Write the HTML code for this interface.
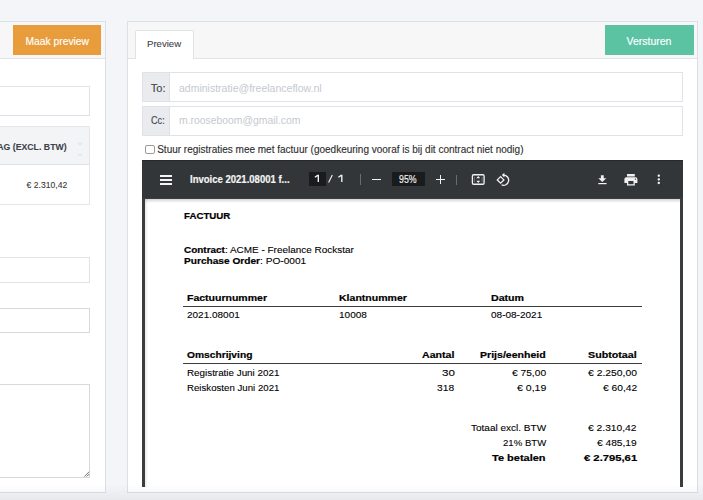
<!DOCTYPE html>
<html><head><meta charset="utf-8">
<style>
*{box-sizing:border-box;margin:0;padding:0}
html,body{width:703px;height:500px;overflow:hidden}
body{background:#f4f5f9;position:relative;font-family:"Liberation Sans",sans-serif;color:#333}
.a{position:absolute}
.t{position:absolute;white-space:nowrap;line-height:1}
.pd{-webkit-text-stroke:0.1px #000}
.pd b,.pdb{-webkit-text-stroke:0.2px #000}
.panel{position:absolute;background:#fff;border:1px solid #dcdfe5}
.hdr{position:absolute;left:0;right:0;top:0;height:37px;background:#f7f7f7;border-bottom:1px solid #e0e3e8}
.btn{position:absolute;color:#fff;font-size:10.3px}
.inp{position:absolute;background:#fff;border:1px solid #dfe2e7}
.pdf{font-family:"Liberation Sans",sans-serif;color:#111}
.b{font-weight:bold}
</style></head><body>

<!-- LEFT PANEL -->
<div class="panel" style="left:-20px;top:21px;width:126px;height:472px">
  <div class="hdr"></div>
</div>
<div class="a" style="left:13px;top:25.3px;width:88px;height:29.6px;background:#e89c3c"></div>
<div class="t" style="left:25.5px;top:36.9px;font-size:10.3px;color:#fff;-webkit-text-stroke:0.15px #fff">Maak preview</div>

<div class="inp" style="left:-10px;top:86px;width:100px;height:29.5px"></div>
<!-- table -->
<div class="a" style="left:-10px;top:126px;width:99.5px;height:78.5px;border:1px solid #e3e6ea;background:#fff"></div>
<div class="a" style="left:-9px;top:127px;width:97.5px;height:37.8px;background:#f3f4f6;border-bottom:1px solid #dfe2e6"></div>
<div class="t b" style="left:-2.8px;top:142.9px;font-size:8.7px;color:#3d4148;letter-spacing:0.03px;-webkit-text-stroke:0.1px #3d4148">AG (EXCL. BTW)</div>
<div class="t" style="left:26.6px;top:180.5px;font-size:8.6px;color:#3a3a3a;-webkit-text-stroke:0.1px #3a3a3a">€ 2.310,42</div>

<div class="inp" style="left:-10px;top:257px;width:100px;height:25.5px"></div>
<div class="inp" style="left:-10px;top:307.5px;width:99.5px;height:25.5px;border-color:#d9d9d9"></div>
<div class="inp" style="left:-10px;top:384px;width:100px;height:93.5px;border-color:#d6d9de"></div>

<!-- RIGHT PANEL -->
<div class="panel" style="left:127px;top:21px;width:571px;height:472px">
  <div class="hdr"></div>
</div>
<div class="a" style="left:134.8px;top:30px;width:58.8px;height:29px;background:#fff;border:1px solid #dfe2e6;border-bottom:none;border-radius:2px 2px 0 0"></div>
<div class="t" style="left:147px;top:38.6px;font-size:9.6px;color:#3f4349;-webkit-text-stroke:0.1px #3f4349">Preview</div>
<div class="a" style="left:605px;top:25.3px;width:89px;height:29.6px;background:#5bc3a1"></div>
<div class="t" style="left:626.5px;top:36px;font-size:10.5px;color:#fff;-webkit-text-stroke:0.15px #fff">Versturen</div>

<div class="inp" style="left:142px;top:72px;width:541px;height:30px"></div>
<div class="a" style="left:142px;top:72px;width:28px;height:30px;background:#e9ebef;border:1px solid #dfe2e7"></div>
<div class="t" style="left:150.8px;top:83px;font-size:11px;color:#40444a;-webkit-text-stroke:0.12px #40444a">To:</div>
<div class="t" style="left:179px;top:82.5px;font-size:10.5px;color:#c5c9cf">administratie@freelanceflow.nl</div>

<div class="inp" style="left:142px;top:106px;width:541px;height:29.5px"></div>
<div class="a" style="left:142px;top:106px;width:28px;height:29.5px;background:#e9ebef;border:1px solid #dfe2e7"></div>
<div class="t" style="left:150.8px;top:116.2px;font-size:10.4px;color:#40444a;-webkit-text-stroke:0.12px #40444a;transform:scaleX(0.88);transform-origin:0 0">Cc:</div>
<div class="t" style="left:179px;top:116px;font-size:10.4px;color:#c5c9cf">m.rooseboom@gmail.com</div>

<div class="a" style="left:145px;top:144.5px;width:9.5px;height:9.5px;border:1px solid #9a9a9a;border-radius:2px;background:#fff"></div>
<div class="t" style="left:157.2px;top:145px;font-size:10px;color:#2e2e2e;-webkit-text-stroke:0.12px #2e2e2e">Stuur registraties mee met factuur (goedkeuring vooraf is bij dit contract niet nodig)</div>

<!-- PDF VIEWER -->
<div class="a" style="left:142px;top:159.6px;width:541px;height:327.4px;background:#3a3d40"></div>
<div class="a" style="left:142px;top:159.6px;width:541px;height:38.9px;background:#323639;border-top:1px solid #26292b"></div>
<div class="a" style="left:145px;top:198.5px;width:535px;height:288.5px;background:#fff"></div>

<!-- TOOLBAR -->
<div class="a" style="left:160px;top:174.5px;width:12px;height:2px;background:#f4f4f4"></div>
<div class="a" style="left:160px;top:178.5px;width:12px;height:2px;background:#f4f4f4"></div>
<div class="a" style="left:160px;top:182.5px;width:12px;height:2px;background:#f4f4f4"></div>
<div class="t" style="left:190.3px;top:174.98px;font-size:10.3px;font-weight:bold;color:#f4f4f4;transform:scaleX(0.925);transform-origin:0 0;-webkit-text-stroke:0.2px #f4f4f4">Invoice 2021.08001 f...</div>
<div class="a" style="left:308.8px;top:172.3px;width:17px;height:14px;background:#191b1c"></div>
<svg class="a" style="left:305px;top:170px" width="45" height="20" viewBox="305 170 45 20">
  <path d="M314.9 177.3 L317.6 175.4 H318.3 V182.1" fill="none" stroke="#f4f4f4" stroke-width="1.35" stroke-linejoin="miter"/>
  <path d="M328.6 182.6 L332.3 175.1" fill="none" stroke="#f4f4f4" stroke-width="1.1"/>
  <path d="M338.4 177.3 L341.1 175.4 H341.8 V182.1" fill="none" stroke="#f4f4f4" stroke-width="1.35"/>
</svg>
<div class="a" style="left:360.2px;top:174.2px;width:1px;height:10.7px;background:#6b6e71"></div>
<div class="a" style="left:372px;top:178.5px;width:9px;height:1.5px;background:#f1f1f1"></div>
<div class="a" style="left:392.2px;top:172.4px;width:32.8px;height:14px;background:#191b1c"></div>
<div class="t" style="left:399.2px;top:174.9px;font-size:10.1px;color:#f4f4f4;transform:scaleX(0.87);transform-origin:0 0;-webkit-text-stroke:0.15px #f4f4f4">95%</div>
<div class="a" style="left:436px;top:178.5px;width:9px;height:1.5px;background:#f1f1f1"></div>
<div class="a" style="left:439.75px;top:174.8px;width:1.5px;height:9px;background:#f1f1f1"></div>
<div class="a" style="left:456px;top:174.5px;width:1px;height:10.5px;background:#6b6e71"></div>
<!-- ICONS -->
<svg class="a" style="left:466px;top:168px" width="56" height="24" viewBox="466 168 56 24">
  <rect x="472.4" y="174.75" width="11.7" height="9.5" rx="1.2" fill="none" stroke="#f1f1f1" stroke-width="1.3"/>
  <path d="M478.25 176.1 L476.3 178.3 L480.2 178.3 Z M478.25 182.9 L476.3 180.7 L480.2 180.7 Z" fill="#f4f4f4"/>
  <path d="M474.4 176.8 V182.2 M482.1 176.8 V182.2" stroke="#77797b" stroke-width="0.8"/>
  <path d="M500.6 176.6 L503.9 179.9 L500.6 183.2 L497.3 179.9 Z" fill="none" stroke="#f4f4f4" stroke-width="1.3"/>
  <path d="M503.6 175.1 A5.1 5.1 0 1 1 501.6 184.9" fill="none" stroke="#f4f4f4" stroke-width="1.3"/>
  <path d="M501.9 175.1 L504.4 172.8 L504.4 177.4 Z" fill="#f4f4f4"/>
</svg>
<svg class="a" style="left:590px;top:168px" width="80" height="24" viewBox="590 168 80 24">
  <path d="M600.9 175.3 H603.7 V178.2 H606.3 L602.3 182.1 L598.3 178.2 H600.9 Z" fill="#f1f1f1"/>
  <rect x="598.3" y="183" width="8.3" height="1.2" fill="#f1f1f1"/>
  <g transform="translate(623.1,172.2) scale(0.65,0.63)">
    <path d="M19 8H5c-1.66 0-3 1.34-3 3v6h4v4h12v-4h4v-6c0-1.660-1.34-3-3-3zm-3 11H8v-5h8v5zm3-7c-.55 0-1-.45-1-1s.45-1 1-1 1 .45 1 1-.45 1-1 1zm-1-9H6v4h12V3z" fill="#f1f1f1"/>
  </g>
  <g transform="translate(651.6,172.2) scale(0.6)">
    <path d="M12 8c1.1 0 2-.9 2-2s-.9-2-2-2-2 .9-2 2 .9 2 2 2zm0 2c-1.1 0-2 .9-2 2s.9 2 2 2 2-.9 2-2-.9-2-2-2zm0 6c-1.1 0-2 .9-2 2s.9 2 2 2 2-.9 2-2-.9-2-2-2z" fill="#f1f1f1"/>
  </g>
</svg>
<!-- PDF CONTENT -->
<div class="t pdb" style="left:183.90px;top:211.10px;font-size:9.45px;font-weight:bold;transform:scaleX(1.0279);transform-origin:0 0;color:#000">FACTUUR</div>
<div class="t pd" style="left:183.60px;top:245.10px;font-size:9.45px;transform:scaleX(1.0545);transform-origin:0 0;color:#000"><b>Contract</b>: ACME - Freelance Rockstar</div>
<div class="t pd" style="left:183.60px;top:255.90px;font-size:9.45px;transform:scaleX(1.0739);transform-origin:0 0;color:#000"><b>Purchase Order</b>: PO-0001</div>
<div class="t pdb" style="left:186.70px;top:292.80px;font-size:9.45px;font-weight:bold;transform:scaleX(1.1135);transform-origin:0 0;color:#000">Factuurnummer</div>
<div class="t pdb" style="left:338.80px;top:292.80px;font-size:9.45px;font-weight:bold;transform:scaleX(1.1165);transform-origin:0 0;color:#000">Klantnummer</div>
<div class="t pdb" style="left:490.90px;top:292.80px;font-size:9.45px;font-weight:bold;transform:scaleX(1.1259);transform-origin:0 0;color:#000">Datum</div>
<div class="a" style="left:183px;top:306px;width:458.5px;height:1px;background:#3c3c3c"></div>
<div class="t pd" style="left:186.70px;top:310.20px;font-size:9.45px;transform:scaleX(1.0576);transform-origin:0 0;color:#000">2021.08001</div>
<div class="t pd" style="left:338.80px;top:310.20px;font-size:9.45px;transform:scaleX(1.0616);transform-origin:0 0;color:#000">10008</div>
<div class="t pd" style="left:490.90px;top:310.20px;font-size:9.45px;transform:scaleX(1.0613);transform-origin:0 0;color:#000">08-08-2021</div>
<div class="t pdb" style="left:186.50px;top:350.20px;font-size:9.45px;font-weight:bold;transform:scaleX(1.0845);transform-origin:0 0;color:#000">Omschrijving</div>
<div class="t pdb" style="left:422.00px;top:350.20px;font-size:9.45px;font-weight:bold;transform:scaleX(1.1219);transform-origin:0 0;color:#000">Aantal</div>
<div class="t pdb" style="left:480.00px;top:350.20px;font-size:9.45px;font-weight:bold;transform:scaleX(1.1185);transform-origin:0 0;color:#000">Prijs/eenheid</div>
<div class="t pdb" style="left:588.20px;top:350.20px;font-size:9.45px;font-weight:bold;transform:scaleX(1.1335);transform-origin:0 0;color:#000">Subtotaal</div>
<div class="a" style="left:183px;top:363px;width:458.5px;height:1px;background:#3c3c3c"></div>
<div class="t pd" style="left:186.50px;top:367.50px;font-size:9.45px;transform:scaleX(1.0419);transform-origin:0 0;color:#000">Registratie Juni 2021</div>
<div class="t pd" style="left:441.50px;top:367.50px;font-size:9.45px;transform:scaleX(1.2276);transform-origin:0 0;color:#000">30</div>
<div class="t pd" style="left:511.70px;top:367.50px;font-size:9.45px;transform:scaleX(1.0817);transform-origin:0 0;color:#000">€ 75,00</div>
<div class="t pd" style="left:588.00px;top:367.50px;font-size:9.45px;transform:scaleX(1.0969);transform-origin:0 0;color:#000">€ 2.250,00</div>
<div class="t pd" style="left:186.50px;top:383.00px;font-size:9.45px;transform:scaleX(1.0237);transform-origin:0 0;color:#000">Reiskosten Juni 2021</div>
<div class="t pd" style="left:437.30px;top:383.00px;font-size:9.45px;transform:scaleX(1.0848);transform-origin:0 0;color:#000">318</div>
<div class="t pd" style="left:516.50px;top:383.00px;font-size:9.45px;transform:scaleX(1.1153);transform-origin:0 0;color:#000">€ 0,19</div>
<div class="t pd" style="left:602.80px;top:383.00px;font-size:9.45px;transform:scaleX(1.0848);transform-origin:0 0;color:#000">€ 60,42</div>
<div class="t pd" style="left:470.80px;top:422.70px;font-size:9.45px;transform:scaleX(1.0607);transform-origin:0 0;color:#000">Totaal excl. BTW</div>
<div class="t pd" style="left:588.40px;top:422.70px;font-size:9.45px;transform:scaleX(1.0880);transform-origin:0 0;color:#000">€ 2.310,42</div>
<div class="t pd" style="left:502.70px;top:437.80px;font-size:9.45px;transform:scaleX(1.0180);transform-origin:0 0;color:#000">21% BTW</div>
<div class="t pd" style="left:597.30px;top:437.80px;font-size:9.45px;transform:scaleX(1.0791);transform-origin:0 0;color:#000">€ 485,19</div>
<div class="t pdb" style="left:492.40px;top:453.00px;font-size:9.45px;font-weight:bold;transform:scaleX(1.1642);transform-origin:0 0;color:#000">Te betalen</div>
<div class="t pdb" style="left:583.80px;top:453.00px;font-size:9.45px;font-weight:bold;transform:scaleX(1.1910);transform-origin:0 0;color:#000">€ 2.795,61</div>
<!-- EXTRAS -->
<svg class="a" style="left:74px;top:138px" width="12" height="22" viewBox="74 138 12 22">
  <path d="M77.8 142.6 L80 144.6 L82.2 142.6" fill="none" stroke="#d3d6da" stroke-width="0.9"/>
  <path d="M77.8 155.9 L80 153.9 L82.2 155.9" fill="none" stroke="#d3d6da" stroke-width="0.9"/>
</svg>
<svg class="a" style="left:80px;top:467px" width="12" height="12" viewBox="80 467 12 12">
  <path d="M84.3 476.6 L89.2 471.7 M86.6 476.6 L89.2 474" stroke="#666" stroke-width="0.9"/>
</svg>
<div class="a" style="left:145px;top:198.5px;width:535px;height:4px;background:linear-gradient(#0000002a,#00000000)"></div>
<div class="a" style="left:145px;top:198.5px;width:3px;height:288.5px;background:linear-gradient(90deg,#00000018,#00000000)"></div>
<div class="a" style="left:0;top:484px;width:703px;height:16px;background:linear-gradient(#00000000,#0000000d)"></div>
</body></html>
